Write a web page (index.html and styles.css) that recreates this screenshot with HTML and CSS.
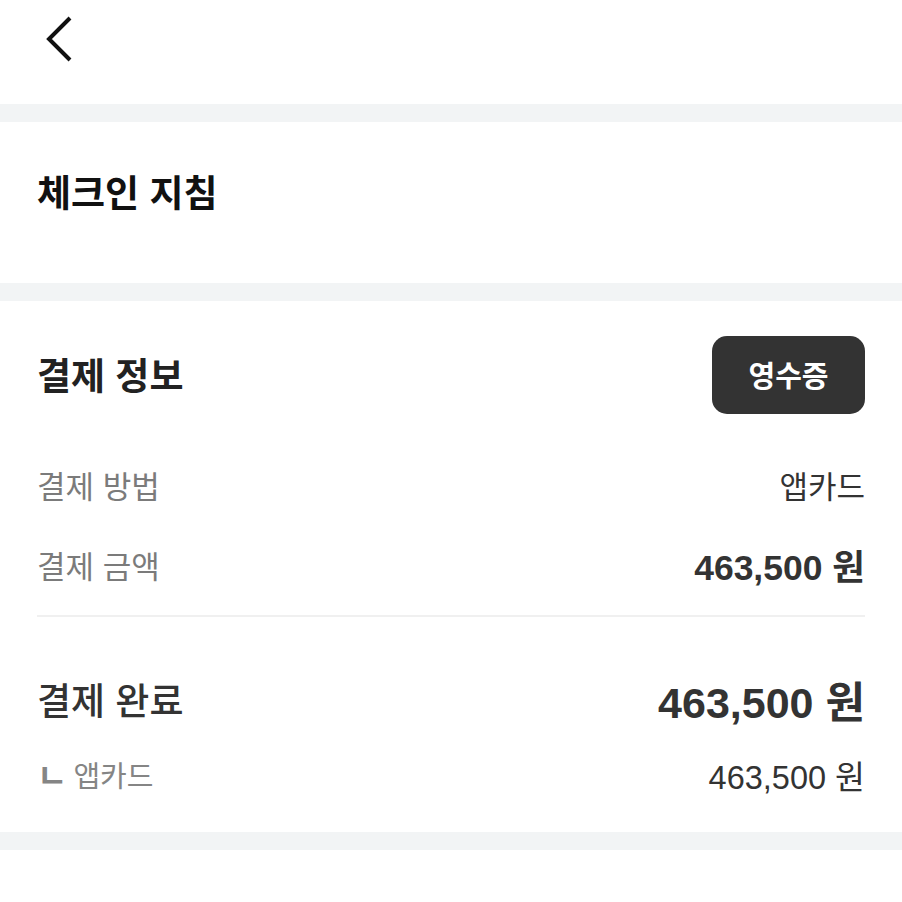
FILE: index.html
```html
<!DOCTYPE html>
<html lang="ko">
<head>
<meta charset="utf-8">
<link rel="stylesheet" href="styles.css">
</head>
<body>
<div class="page">
  <header class="topbar">
    <svg class="back" width="30" height="48" viewBox="0 0 30 48" aria-hidden="true">
      <path d="M24 3 L3 24 L24 45" fill="none" stroke="#111" stroke-width="4" stroke-linecap="butt" stroke-linejoin="miter"/>
    </svg>
  </header>
  <div class="band"></div>
  <section class="checkin">
    <h2 class="title title-black">체크인 지침</h2>
  </section>
  <div class="band"></div>
  <section class="payment">
    <div class="pay-head">
      <h2 class="title">결제 정보</h2>
      <button class="receipt">영수증</button>
    </div>
    <div class="rows">
      <div class="row">
        <span class="label">결제 방법</span>
        <span class="value">앱카드</span>
      </div>
      <div class="row">
        <span class="label">결제 금액</span>
        <span class="value amount-bold">463,500 원</span>
      </div>
    </div>
    <div class="divider"></div>
    <div class="total-row">
      <span class="total-label">결제 완료</span>
      <span class="total-amount">463,500 원</span>
    </div>
    <div class="sub-row">
      <span class="label sub-label"><span class="corner">ㄴ</span>앱카드</span>
      <span class="sub-amount">463,500 원</span>
    </div>
  </section>
  <div class="band"></div>
  <section class="tail"></section>
</div>
</body>
</html>
```

FILE: styles.css
```css
* { box-sizing: border-box; }
html, body { margin: 0; padding: 0; background: #fff; }
body {
  font-family: "Liberation Sans", "Noto Sans CJK KR", sans-serif;
  color: #222;
}
.page { width: 902px; }
.topbar {
  height: 104px;
  padding: 15px 0 0 46px;
}
.back { display: block; }
.band { height: 18px; background: #f2f4f5; }
.checkin {
  height: 161px;
  padding: 0 37px 14px;
  display: flex;
  align-items: center;
}
.title {
  margin: 0;
  font-size: 37px;
  font-weight: 700;
  color: #222;
  line-height: 1.2;
}
.title-black { color: #111; }
.payment {
  padding: 35px 37px 0;
  height: 531px;
}
.pay-head {
  height: 78px;
  display: flex;
  align-items: center;
  justify-content: space-between;
}
.pay-head .title { padding-top: 6px; }
.receipt {
  width: 153px;
  height: 78px;
  border: 0;
  border-radius: 15px;
  background: #333333;
  color: #fff;
  font-family: "Noto Sans CJK KR", sans-serif;
  font-size: 29px;
  font-weight: 700;
  padding: 0 0 3px;
}
.rows { margin-top: 30px; }
.row {
  height: 80px;
  display: flex;
  align-items: center;
  justify-content: space-between;
}
.label {
  font-size: 31px;
  color: #7b7b7b;
  font-weight: 400;
}
.value {
  font-size: 31px;
  color: #333;
}
.amount-bold {
  font-size: 35.5px;
  font-weight: 700;
  color: #333;
}
.divider {
  margin-top: 11px;
  height: 2px;
  background: #f0f0f0;
}
.total-row {
  margin-top: 50px;
  height: 64px;
  display: flex;
  align-items: center;
  justify-content: space-between;
}
.total-label {
  font-size: 37px;
  font-weight: 500;
  color: #333;
}
.total-amount {
  font-size: 43px;
  font-weight: 700;
  color: #333;
}
.sub-row {
  margin-top: 18px;
  height: 50px;
  display: flex;
  align-items: center;
  justify-content: space-between;
}
.sub-label { font-size: 29px; color: #858585; display: flex; align-items: center; }
.corner {
  font-weight: 700;
  margin-right: 6px;
  font-size: 33px;
}
.sub-amount {
  font-size: 32.5px;
  color: #333;
}
.tail { height: 50px; }
```
